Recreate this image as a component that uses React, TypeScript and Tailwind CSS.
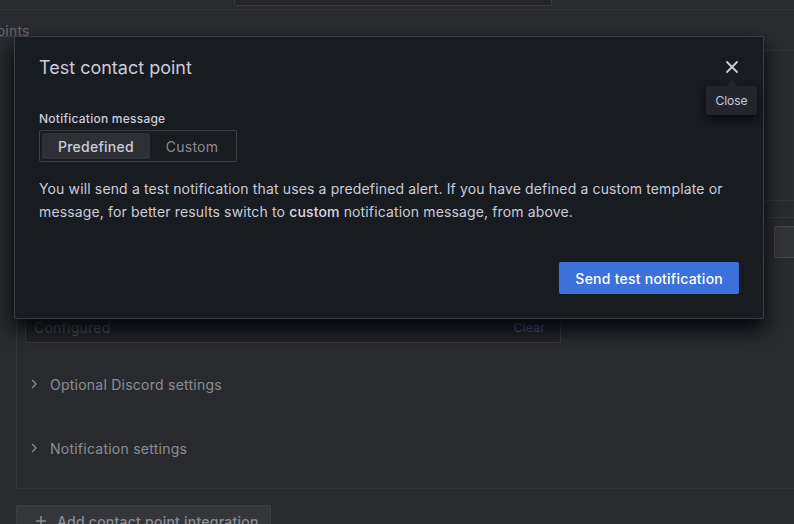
import React from "react";

function Chevron() {
  return (
    <svg width="16" height="16" viewBox="0 0 16 16" fill="none">
      <path d="M6.5 4.5L10 8l-3.5 3.5" stroke="#ccccdc" strokeWidth="1.4" strokeLinecap="round" strokeLinejoin="round" />
    </svg>
  );
}

export default function App() {
  return (
    <div className="relative w-[794px] h-[524px] overflow-hidden bg-[#181b1f] font-['Inter',sans-serif] tracking-[0.015em] text-[#ccccdc]">
      {/* top header */}
      <div className="h-[10px] border-b border-[rgba(204,204,220,0.12)] bg-[#181b1f] overflow-hidden pl-[234px]">
        <div className="w-[318px] h-[32px] -mt-[26px] rounded-[2px] border border-[rgba(204,204,220,0.2)] bg-[#111217]" />
      </div>
      {/* tabs */}
      <div className="h-[40px] bg-[#1b1d22] flex items-start overflow-hidden">
        <div className="-ml-[70px] pt-[15px] flex flex-col">
          <span className="text-[14px] leading-[11px] h-[11px] text-[rgba(204,204,220,0.65)] whitespace-nowrap">Contact points</span>
          <div className="h-px bg-[rgba(204,204,220,0.2)]" />
        </div>
      </div>
      {/* content */}
      <div className="pl-4">
        <div className="w-[1000px] border border-[rgba(204,204,220,0.12)] rounded-[2px] px-2 pb-[20px]">
          <div className="h-[149px] pt-4 flex flex-col gap-2">
            <span className="text-[12px] font-medium">Integration</span>
            <div className="w-[536px] h-[32px] border border-[rgba(204,204,220,0.2)] rounded-[2px] bg-[#111217]" />
          </div>
          <div className="h-[18px] border-y border-[rgba(204,204,220,0.12)]" />
          <div className="mt-[8px] flex gap-2 items-center">
            <div className="w-[741px] h-[32px] border border-[rgba(204,204,220,0.2)] rounded-[2px] bg-[#111217]" />
            <div className="w-[40px] h-[32px] border border-[rgba(204,204,220,0.2)] rounded-[2px] bg-[#2a2d33] flex items-center justify-end pr-1">
              <span className="w-[8px] h-[10px] rounded-[2px] border border-[#ccccdc]" />
            </div>
          </div>
          <div className="mt-[29px] h-[16px] mb-[8px] text-[12px] leading-[16px] font-medium">Webhook URL</div>
          <div className="w-[536px] h-[32px] border border-[rgba(204,204,220,0.2)] rounded-[2px] bg-[#111217] flex items-center justify-between px-2">
            <span className="text-[14px] leading-[20px] pt-px text-[rgba(204,204,220,0.45)]">Configured</span>
            <span className="text-[12px] leading-[16px] pt-[2px] text-[#5b86d6] pr-[7px]">Clear</span>
          </div>
          <div className="mt-[21px] h-[40px] flex items-center gap-2 pl-px">
            <Chevron />
            <span className="text-[14px]">Optional Discord settings</span>
          </div>
          <div className="mt-[24px] h-[40px] flex items-center gap-2 pl-px">
            <Chevron />
            <span className="text-[14px]">Notification settings</span>
          </div>
        </div>
        <div className="mt-4 w-[255px] h-[32px] rounded-[2px] bg-[rgba(204,204,220,0.12)] border border-[rgba(204,204,220,0.1)] flex items-center gap-2 pl-4">
          <svg width="16" height="16" viewBox="0 0 16 16"><path d="M8 3v10M3 8h10" stroke="#ccccdc" strokeWidth="1.5" /></svg>
          <span className="text-[14px] font-medium">Add contact point integration</span>
        </div>
      </div>

      {/* backdrop */}
      <div className="absolute inset-0 bg-[rgba(63,62,62,0.45)]" />

      {/* modal */}
      <div className="absolute left-[14px] top-[36px] w-[750px] bg-[#181b1f] border border-[rgba(204,204,220,0.2)] rounded-[2px] shadow-[0px_10px_20px_rgb(1,4,9)] pb-6">
        <div className="h-[62px] px-6 flex items-center justify-between">
          <h1 className="text-[18px] leading-[22px] font-normal tracking-normal text-[#ccccdc]">Test contact point</h1>
          <svg width="12" height="12" viewBox="0 0 12 12" className="mb-[3px] mr-px">
            <path d="M1 1l10 10M11 1L1 11" stroke="#ccccdc" strokeWidth="1.8" strokeLinecap="round" />
          </svg>
        </div>
        <div className="px-6 pt-[12px]">
          <div className="text-[12px] leading-[16px] font-medium mb-[3px]">Notification message</div>
          <div className="inline-flex h-[32px] p-[2px] border border-[rgba(204,204,220,0.2)] rounded-[2px]">
            <div className="px-4 flex items-center bg-[#2e3036] rounded-[2px] text-[14px] font-medium text-[#ccccdc]">Predefined</div>
            <div className="px-4 flex items-center text-[14px] text-[rgba(204,204,220,0.65)]">Custom</div>
          </div>
          <p className="mt-[15px] text-[14px] leading-[23px] tracking-[0.01em] text-[#ccccdc]">
            You will send a test notification that uses a predefined alert. If you have defined a custom template or message, for better results switch to <strong className="font-medium text-[#d8d8e4]">custom</strong> notification message, from above.
          </p>
          <div className="mt-[39px] flex justify-end">
            <div className="h-[32px] px-4 flex items-center rounded-[2px] bg-[#3d71d9] text-[14px] font-medium text-white">Send test notification</div>
          </div>
        </div>
      </div>

      {/* tooltip */}
      <div className="absolute left-[706px] top-[86px] w-[51px] h-[29px] bg-[#22252b] rounded-[2px] shadow-[0_4px_8px_rgba(1,4,9,0.75)] flex items-center justify-center text-[12px] tracking-normal text-[#ccccdc]">
        Close
        <div className="absolute left-[20px] -top-[6px] w-0 h-0 border-x-[6px] border-x-transparent border-b-[6px] border-b-[#22252b]" />
      </div>
    </div>
  );
}
